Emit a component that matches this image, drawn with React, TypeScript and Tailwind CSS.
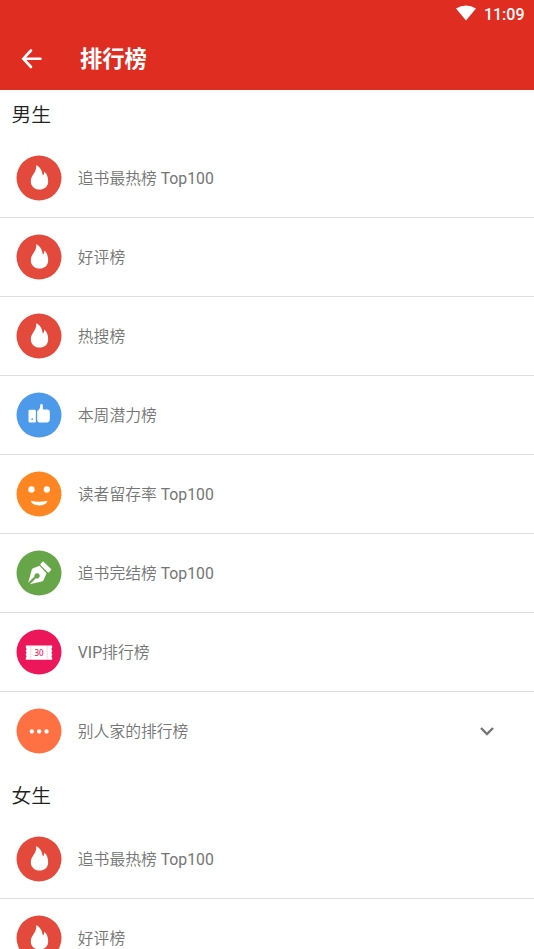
import type { ReactNode } from "react";

type Rank = {
    label: string;
    icon: ReactNode;
    expandable?: boolean;
};

type Section = {
    title: string;
    ranks: Rank[];
};

// -----------------------
// Icons
// -----------------------
function RoundIcon({ className, children }: { className: string; children: ReactNode }) {
    return (
        <svg viewBox="0 0 138 138" className="size-[46px] shrink-0" fill="#fff">
            <circle cx="69" cy="69" r="67.500" className={className} />
            <g transform="translate(1.5 1.5)">{children}</g>
        </svg>
    );
}

function FlameIcon() {
    return (
        <RoundIcon className="fill-[#e34a3b]">
            <path d="M59 29C70 33 77 44 79 60C82 58 84 54 83 48C91 54 95 65 95 77C95 93 84 102 69 102C54 102 43 92 43 77C43 58 62 50 59 29Z" />
        </RoundIcon>
    );
}

function ThumbIcon() {
    return (
        <RoundIcon className="fill-[#4d9aea]">
            <path
                fillRule="evenodd"
                d="M39 52H55Q58 52 58 55V87Q58 90 55 90H39Q36 90 36 87V55Q36 52 39 52ZM47 77A2.8 2.8 0 1 0 47 82.600A2.8 2.8 0 1 0 47 77Z"
            />
            <path d="M62 58Q62 53 67 52Q71 49 71 39Q71 34 75 34Q79 34 79 40V51H94Q100 52 100 58V82Q100 89 93 90H68Q62 89 62 83Z" />
        </RoundIcon>
    );
}

function SmileIcon() {
    return (
        <RoundIcon className="fill-[#ff8622]">
            <circle cx="45" cy="54" r="9.500" />
            <circle cx="91" cy="54" r="9.500" />
            <path d="M43 88Q68 94 93 88C90 98 80 102 68 102C56 102 46 98 43 88Z" />
        </RoundIcon>
    );
}

function PenIcon() {
    return (
        <RoundIcon className="fill-[#67a549]">
            <path d="M80 32L105 57L98 65Q95 67 92 64L73 45Q70 42 73 39Z" />
            <path d="M35 97L46 57Q47 54 50 53L69 46L90 68L82 88Q81 91 78 92L40 101L58 83A8 8 0 1 0 54 78Z" />
        </RoundIcon>
    );
}

function TicketIcon() {
    return (
        <RoundIcon className="fill-[#eb175a]">
            <path d="M29 48H107V55A4 4 0 0 0 107 62V66A4 4 0 0 0 107 73V77A4 4 0 0 0 107 84V91H28V84A4 4 0 0 0 28 77V73A4 4 0 0 0 28 66V62A4 4 0 0 0 28 55V48Z" />
            <path
                d="M43 49V91M92 49V91"
                fill="none"
                stroke="#f0709a"
                strokeWidth="1.500"
                strokeDasharray="3 2"
            />
            <text
                x="67.500"
                y="78.500"
                fill="#eb175a"
                textAnchor="middle"
                className="font-['Noto_Sans',sans-serif] text-[24px] font-medium"
            >
                30
            </text>
        </RoundIcon>
    );
}

function MoreIcon() {
    return (
        <RoundIcon className="fill-[#ff7043]">
            <circle cx="46" cy="69" r="6.500" />
            <circle cx="68" cy="69" r="6.500" />
            <circle cx="90" cy="69" r="6.500" />
        </RoundIcon>
    );
}

// -----------------------
// Data
// -----------------------
const sections: Section[] = [
    {
        title: "男生",
        ranks: [
            { label: "追书最热榜 Top100", icon: <FlameIcon /> },
            { label: "好评榜", icon: <FlameIcon /> },
            { label: "热搜榜", icon: <FlameIcon /> },
            { label: "本周潜力榜", icon: <ThumbIcon /> },
            { label: "读者留存率 Top100", icon: <SmileIcon /> },
            { label: "追书完结榜 Top100", icon: <PenIcon /> },
            { label: "VIP排行榜", icon: <TicketIcon /> },
            { label: "别人家的排行榜", icon: <MoreIcon />, expandable: true },
        ],
    },
    {
        title: "女生",
        ranks: [
            { label: "追书最热榜 Top100", icon: <FlameIcon /> },
            { label: "好评榜", icon: <FlameIcon /> },
        ],
    },
];

function Header() {
    return (
        <header className="h-[89.600px] shrink-0 bg-[#e02d21] text-white">
            <div className="flex h-7 items-center justify-end gap-2 pr-[9.500px]">
                <svg viewBox="0 0 20 16" className="-mt-0.5 h-4 w-5" fill="currentColor">
                    <path d="M0 3.500Q10 -2.500 20 3.500L10 15.500Z" />
                </svg>
                <span className="pt-px text-[16px] font-medium leading-7">11:09</span>
            </div>
            <div className="flex h-[61px] items-center pl-[21px]">
                <svg
                    viewBox="0 0 22 22"
                    className="size-[22px]"
                    fill="none"
                    stroke="currentColor"
                    strokeWidth="2.600"
                    strokeLinecap="round"
                >
                    <path d="M19.500 10.700H2.500M10 2.500L2.300 10.700L10 19" />
                </svg>
                <h1 className="ml-[37px] text-[22.300px] font-bold leading-8">排行榜</h1>
            </div>
        </header>
    );
}

function RankRow({ rank, last }: { rank: Rank; last: boolean }) {
    return (
        <li
            className={`flex h-[79.080px] items-center border-b pl-[15.800px] pr-[39px] ${last ? "border-transparent" : "border-[#dedede]"}`}
        >
            {rank.icon}
            <span className="ml-[16px] flex-1 pt-[2px] text-[15.800px] leading-6 text-[#757575]">
                {rank.label}
            </span>
            {rank.expandable && (
                <svg
                    viewBox="0 0 16 16"
                    className="size-4"
                    fill="none"
                    stroke="#757575"
                    strokeWidth="2.400"
                >
                    <path d="M2 5L8 11L14 5" />
                </svg>
            )}
        </li>
    );
}

export default function App() {
    return (
        <div className="flex h-screen flex-col overflow-hidden bg-white font-[Roboto,'Noto_Sans_CJK_SC',sans-serif]">
            <Header />
            <main className="min-h-0 flex-1 overflow-hidden pt-[0.600px] font-[Roboto,'Noto_Sans_CJK_SC_DemiLight','Noto_Sans_CJK_SC',sans-serif]">
                {sections.map(section => (
                    <section key={section.title}>
                        <h2 className="h-[48.450px] pl-[11.500px] text-[19.800px] leading-[51px] text-[#212121]">
                            {section.title}
                        </h2>
                        <ul>
                            {section.ranks.map((rank, idx) => (
                                <RankRow
                                    key={rank.label}
                                    rank={rank}
                                    last={idx === section.ranks.length - 1}
                                />
                            ))}
                        </ul>
                    </section>
                ))}
            </main>
        </div>
    );
}
